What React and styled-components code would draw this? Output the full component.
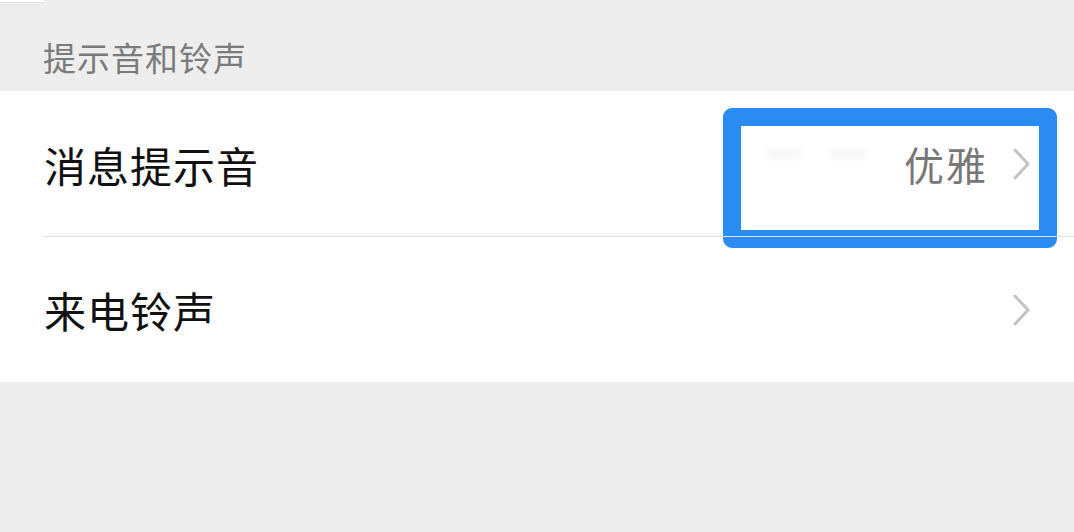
import styled, { createGlobalStyle } from "styled-components";

const GlobalStyle = createGlobalStyle`
  html, body {
    margin: 0;
    padding: 0;
    background: #ededed;
  }
  body {
    font-family: "Noto Sans CJK SC", "Noto Sans", sans-serif;
  }
`;

const Page = styled.div`
  width: 1074px;
  height: 532px;
  background: #ededed;
  overflow: hidden;
`;

const TopEdge = styled.div`
  height: 2px;
  background: #fff;
  margin-right: 1030px;
  border-bottom: 1px solid #e4e4e4;
`;

const SectionTitle = styled.div`
  box-sizing: border-box;
  height: 88px;
  padding: 20px 0 0 43px;
  display: flex;
  align-items: center;
  font-size: 33px;
  color: #7a7a7a;
  letter-spacing: 1px;
`;

const Panel = styled.div`
  background: #fff;
`;

const Row = styled.div`
  position: relative;
  display: flex;
  align-items: center;
  height: ${(p) => p.$h}px;
  padding-left: 44px;
  padding-right: 42px;
  ${(p) =>
    p.$divider &&
    `
    &::after {
      position: absolute;
      left: 42px;
      right: 0;
      bottom: 0;
      height: 1px;
      background: #e2e2e2;
      content: "";
    }
  `}
`;

const Label = styled.span`
  flex: 1;
  font-size: 42px;
  color: #111;
  letter-spacing: 1px;
`;

const Value = styled.span`
  font-size: 40px;
  color: #777;
  letter-spacing: 2px;
  margin-right: 24px;
`;

const Chevron = styled.svg`
  width: 20px;
  height: 34px;
  display: block;
`;

const Highlight = styled.div`
  position: absolute;
  left: 723px;
  top: 17px;
  width: 334px;
  height: 140px;
  box-sizing: border-box;
  border: 18px solid #2a8bf2;
  border-radius: 9px;
  pointer-events: none;
`;

const Blur = styled.span`
  position: absolute;
  top: 22px;
  left: ${(p) => p.$x}px;
  width: 34px;
  height: 10px;
  background: #f6f6f6;
  filter: blur(3px);
`;

function Arrow() {
  return (
    <Chevron viewBox="0 0 20 34">
      <path d="M3 3 L16 17 L3 31" fill="none" stroke="#c2c2c2" strokeWidth="3" strokeLinecap="round" strokeLinejoin="round" />
    </Chevron>
  );
}

export default function App() {
  return (
    <Page>
      <GlobalStyle />
      <TopEdge />
      <SectionTitle>提示音和铃声</SectionTitle>
      <Panel>
        <Row $h={146} $divider>
          <Label>消息提示音</Label>
          <Value>优雅</Value>
          <Arrow />
          <Highlight>
            <Blur $x={25} />
            <Blur $x={90} />
          </Highlight>
        </Row>
        <Row $h={145}>
          <Label>来电铃声</Label>
          <Arrow />
        </Row>
      </Panel>
    </Page>
  );
}
